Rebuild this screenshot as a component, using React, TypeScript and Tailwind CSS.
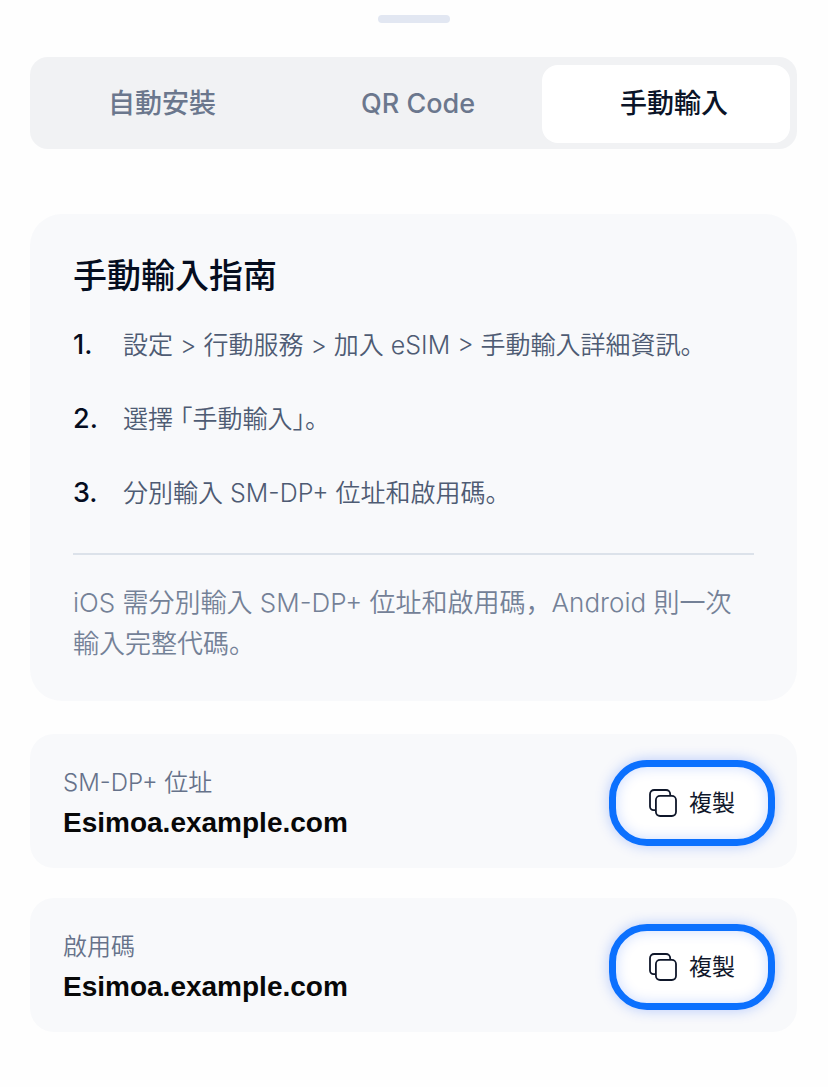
import { useState } from "react";
import clsx from "clsx";

const TABS = ["自動安裝", "QR Code", "手動輸入"];

const STEPS = [
  "設定 > 行動服務 > 加入 eSIM > 手動輸入詳細資訊。",
  "選擇 「手動輸入」。",
  "分別輸入 SM-DP+ 位址和啟用碼。",
];

const FIELDS = [
  { id: "address", label: "SM-DP+ 位址", value: "Esimoa.example.com" },
  { id: "code", label: "啟用碼", value: "Esimoa.example.com" },
];

function CopyIcon() {
  return (
    <svg
      viewBox="0 0 28 28"
      className="size-7 shrink-0"
      fill="none"
      stroke="currentColor"
      strokeWidth="1.8"
      strokeLinejoin="round"
      aria-hidden="true"
    >
      <path d="M6.9 21.2H4.6A3.6 3.6 0 0 1 1 17.6V5.2A4.2 4.2 0 0 1 5.2 1H17a4.2 4.2 0 0 1 4.2 4.2v1.7" />
      <rect x="6.9" y="6.9" width="20.1" height="20.1" rx="4.2" />
    </svg>
  );
}

function CopyRow({ label, value }: { label: string; value: string }) {
  return (
    <div className="flex items-center justify-between rounded-3xl bg-[#f8f9fb] pt-[26px] pr-[22px] pb-[22px] pl-[33px]">
      <dl className="min-w-0">
        <dt className="text-2xl leading-10 font-[350] text-[#66728a]">
          {label}
        </dt>
        <dd className="font-['Liberation_Sans',sans-serif] text-[28px] leading-10 font-bold text-[#080808]">
          {value}
        </dd>
      </dl>
      <button
        type="button"
        onClick={() => navigator.clipboard?.writeText(value)}
        className="flex h-[86px] w-[166px] shrink-0 items-center justify-center gap-3 rounded-[38px] border-[7px] border-[#0b70fe] bg-white text-[23px] text-[#0f172a] shadow-[0_0_14px_rgba(11,80,254,0.28),inset_0_0_14px_rgba(11,80,254,0.2)]"
      >
        <CopyIcon />
        複製
      </button>
    </div>
  );
}

export default function App() {
  const [active, setActive] = useState(2);

  return (
    <main className="min-h-screen bg-[#fefefe] pt-[15px] pr-[31px] pb-[54px] pl-[30px] font-['Inter','Noto_Sans_CJK_JP','Noto_Sans_CJK_TC',sans-serif]">
      <div className="mx-auto h-2 w-18 rounded-full bg-[#e2e7f2]" />

      <div
        role="tablist"
        className="mt-[34px] grid grid-cols-3 gap-2 rounded-[18px] bg-[#f1f2f4] pt-2 pr-[7px] pb-[6px]"
      >
        {TABS.map((tab, i) => (
          <button
            key={tab}
            type="button"
            role="tab"
            aria-selected={active === i}
            onClick={() => setActive(i)}
            className={clsx(
              "h-[78px] rounded-2xl pl-4 text-[27px] font-medium",
              active === i ? "bg-white text-[#0b1428]" : "text-[#6b778d]"
            )}
          >
            {tab}
          </button>
        ))}
      </div>

      <section className="mt-[65px] rounded-[32px] bg-[#f8f9fb] px-[43px] pt-10 pb-[37px]">
        <h2 className="text-[34px] leading-[44px] font-medium text-[#050d1f]">
          手動輸入指南
        </h2>
        <ol className="mt-[27px] space-y-[34px] text-[25px] leading-10">
          {STEPS.map((step, i) => (
            <li key={step} className="flex">
              <span className="w-[50px] shrink-0 text-[27px] font-medium text-[#050d1f]">
                {i + 1}.
              </span>
              <span className="font-[350] text-[#4e5b73] [font-feature-settings:'halt']">
                {step}
              </span>
            </li>
          ))}
        </ol>
        <hr className="mt-10 border-t-2 border-[#dce2ea]" />
        <p className="mt-[27px] text-[26px] leading-[41px] font-[350] text-[#748197]">
          iOS 需分別輸入 SM-DP+ 位址和啟用碼，Android 則一次輸入完整代碼。
        </p>
      </section>

      <div className="mt-[33px] space-y-[30px]">
        {FIELDS.map((field) => (
          <CopyRow key={field.id} label={field.label} value={field.value} />
        ))}
      </div>
    </main>
  );
}
